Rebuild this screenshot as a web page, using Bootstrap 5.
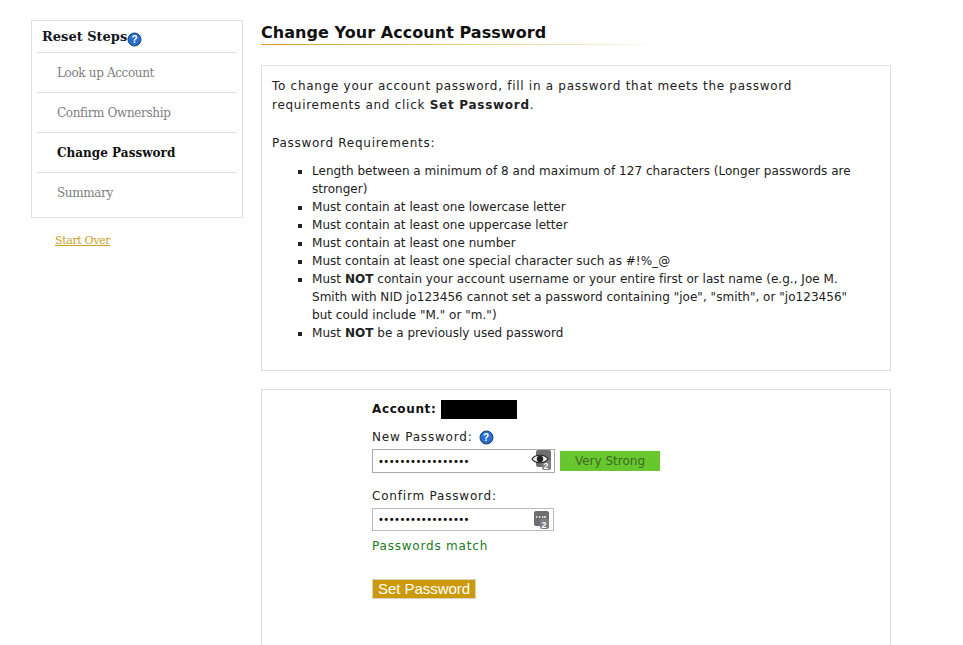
<!DOCTYPE html>
<html lang="en"><head><meta charset="utf-8"><title>Change Your Account Password</title>
<link href="https://cdn.jsdelivr.net/npm/bootstrap@5.3.0/dist/css/bootstrap.min.css" rel="stylesheet">
<style>
html,body{height:645px;overflow:hidden}
body{background:#fff;color:#222;font-family:"DejaVu Sans",sans-serif;font-size:12px;line-height:18px}
.shell{padding:20px 0 0 31px;gap:18px;height:645px;overflow:hidden}
.side-col{width:212px;flex:none}
.side-box{border:1px solid #e1e0dc;padding:0 5px;height:198px;font-family:"DejaVu Serif",serif;font-size:12px}
.side-head{height:32px;border-bottom:1px solid #e1e0dc;padding:7px 0 0 5px;font-weight:700;font-size:13px;letter-spacing:0;color:#16161f;display:flex;align-items:flex-start}
.side-help{margin-top:4px}
.side-item{height:40px;border-bottom:1px solid #e1e0dc;padding:11px 0 0 20px;color:#808080;letter-spacing:-.35px}
.side-item:last-child{border-bottom:0}
.side-item.now{color:#111;font-weight:700;letter-spacing:.02px}
.start-link{display:inline-block;margin:14px 0 0 24px;color:#c9a227;font-family:"DejaVu Serif",serif;font-size:11px;letter-spacing:-.35px}
.main-col{width:630px;flex:none}
.page-title{font-size:16px;line-height:23px;padding-top:1px;font-weight:700;color:#111;margin:0;height:24px;letter-spacing:.05px}
.title-rule{height:1px;width:400px;background:linear-gradient(90deg,#d19d16,#e3c468 40%,#f2e6c0 80%,#fff);margin:0 0 20px}
.info-box{border:1px solid #e1e0dc;height:306px;padding:11px 10px 10px;margin-bottom:18px;letter-spacing:.72px;line-height:19px}
.info-box p{margin:0 0 19px}
.info-box .req-head{margin-bottom:9px}
.info-box ul{margin:0;padding:0 20px 0 40px;list-style:square;line-height:18px;letter-spacing:.03px}
.form-box{border:1px solid #e1e0dc;height:300px;padding:9px 0 0 110px;letter-spacing:.8px}
.acct-line{font-weight:700;display:flex;align-items:center;gap:5px;height:20px;color:#111;letter-spacing:.62px}
.redact{width:76px;height:19px;background:#000;display:inline-block}
.f-label{display:flex;align-items:center;gap:7px;height:18px;margin-top:9px}
.f-label.next{margin-top:14px}
.pw-row{display:flex;gap:5px;align-items:center;margin-top:3px}
.pw-wrap{position:relative;height:24px;border:1px solid #aaa;background:#fff;width:183px}
.pw-wrap.second{width:182px;height:23px;border-color:#bbb}
.pw-input{border:0;outline:0;padding:0 0 0 5px;width:150px;height:100%;font-size:10px;color:#000;font-family:"DejaVu Sans",sans-serif;background:transparent;letter-spacing:-.55px;display:block}
.pw-icon{position:absolute;right:0;top:0}
.strength{width:100px;height:20px;background:#68c72f;color:#3d6b22;text-align:center;line-height:20px;letter-spacing:0}
.match{color:#1b7a1e;margin-top:6px}
.set-btn{margin-top:24px;background:#cb9a0a;border:1px solid #d8d2c0;color:#fff;font-family:"Liberation Sans",sans-serif;font-size:15px;line-height:18px;padding:0 5px;border-radius:0;letter-spacing:-.05px;height:20px;width:104px;white-space:nowrap}
.set-btn:hover{background:#cb9a0a;color:#fff;border-color:#d8d2c0}
</style></head>
<body>
<div class="d-flex shell">
<aside class="side-col">
<div class="side-box">
<div class="side-head">Reset Steps<svg width="15" height="15" viewBox="0 0 15 15" class="side-help"><circle cx="7.5" cy="7.5" r="6.5" fill="#2a6fc9" stroke="#14407f"/><text x="7.5" y="11" font-size="10" font-family="Liberation Sans" font-weight="700" text-anchor="middle" fill="#fff">?</text></svg></div>
<div class="side-item">Look up Account</div>
<div class="side-item">Confirm Ownership</div>
<div class="side-item now">Change Password</div>
<div class="side-item">Summary</div>
</div>
<a href="#" class="start-link">Start Over</a>
</aside>
<main class="main-col">
<h1 class="page-title">Change Your Account Password</h1>
<div class="title-rule"></div>
<div class="info-box">
<p>To change your account password, fill in a password that meets the password requirements and click <b>Set Password</b>.</p>
<p class="req-head">Password Requirements:</p>
<ul>
<li>Length between a minimum of 8 and maximum of 127 characters (Longer passwords are stronger)</li>
<li>Must contain at least one lowercase letter</li>
<li>Must contain at least one uppercase letter</li>
<li>Must contain at least one number</li>
<li>Must contain at least one special character such as #!%_@</li>
<li>Must <b>NOT</b> contain your account username or your entire first or last name (e.g., Joe M. Smith with NID jo123456 cannot set a password containing "joe", "smith", or "jo123456" but could include "M." or "m.")</li>
<li>Must <b>NOT</b> be a previously used password</li>
</ul>
</div>
<div class="form-box">
<div class="acct-line">Account: <span class="redact"></span></div>
<div class="f-label">New Password: <svg width="15" height="15" viewBox="0 0 15 15"><circle cx="7.5" cy="7.5" r="6.5" fill="#2a6fc9" stroke="#14407f"/><text x="7.5" y="11" font-size="10" font-family="Liberation Sans" font-weight="700" text-anchor="middle" fill="#fff">?</text></svg></div>
<div class="pw-row">
<div class="pw-wrap"><input class="pw-input" type="password" value="aaaaaaaaaaaaaaaaa" aria-label="New Password">
<svg class="pw-icon" width="24" height="22" viewBox="0 0 24 22"><rect x="6" y="0" width="15" height="17" rx="2" fill="#6e6e6e"/><rect x="12" y="10" width="9" height="10" rx="2" fill="#808080"/><text x="16.5" y="19" font-size="9" font-weight="700" font-family="Liberation Sans" text-anchor="middle" fill="#fff">2</text><path d="M2 9c3-5 13-5 16 0-3 5-13 5-16 0z" fill="#e8e8e8" stroke="#222" stroke-width="1.2"/><circle cx="10" cy="9" r="3.2" fill="#222"/></svg></div>
<div class="strength">Very Strong</div>
</div>
<div class="f-label next">Confirm Password:</div>
<div class="pw-row">
<div class="pw-wrap second"><input class="pw-input" type="password" value="aaaaaaaaaaaaaaaaa" aria-label="Confirm Password">
<svg class="pw-icon" width="22" height="21" viewBox="0 0 22 21"><rect x="3" y="2" width="15" height="15" rx="2" fill="#6e6e6e"/><rect x="9" y="10" width="9" height="10" rx="2" fill="#808080"/><text x="13.5" y="19" font-size="9" font-weight="700" font-family="Liberation Sans" text-anchor="middle" fill="#fff">2</text><path d="M5 8h1.4M8 8h1.4M11 8h1.4M14 7v2" stroke="#fff" stroke-width="1.4"/></svg></div>
</div>
<div class="match">Passwords match</div>
<button type="button" class="btn set-btn d-block">Set Password</button>
</div>
</main>
</div>
</body></html>
